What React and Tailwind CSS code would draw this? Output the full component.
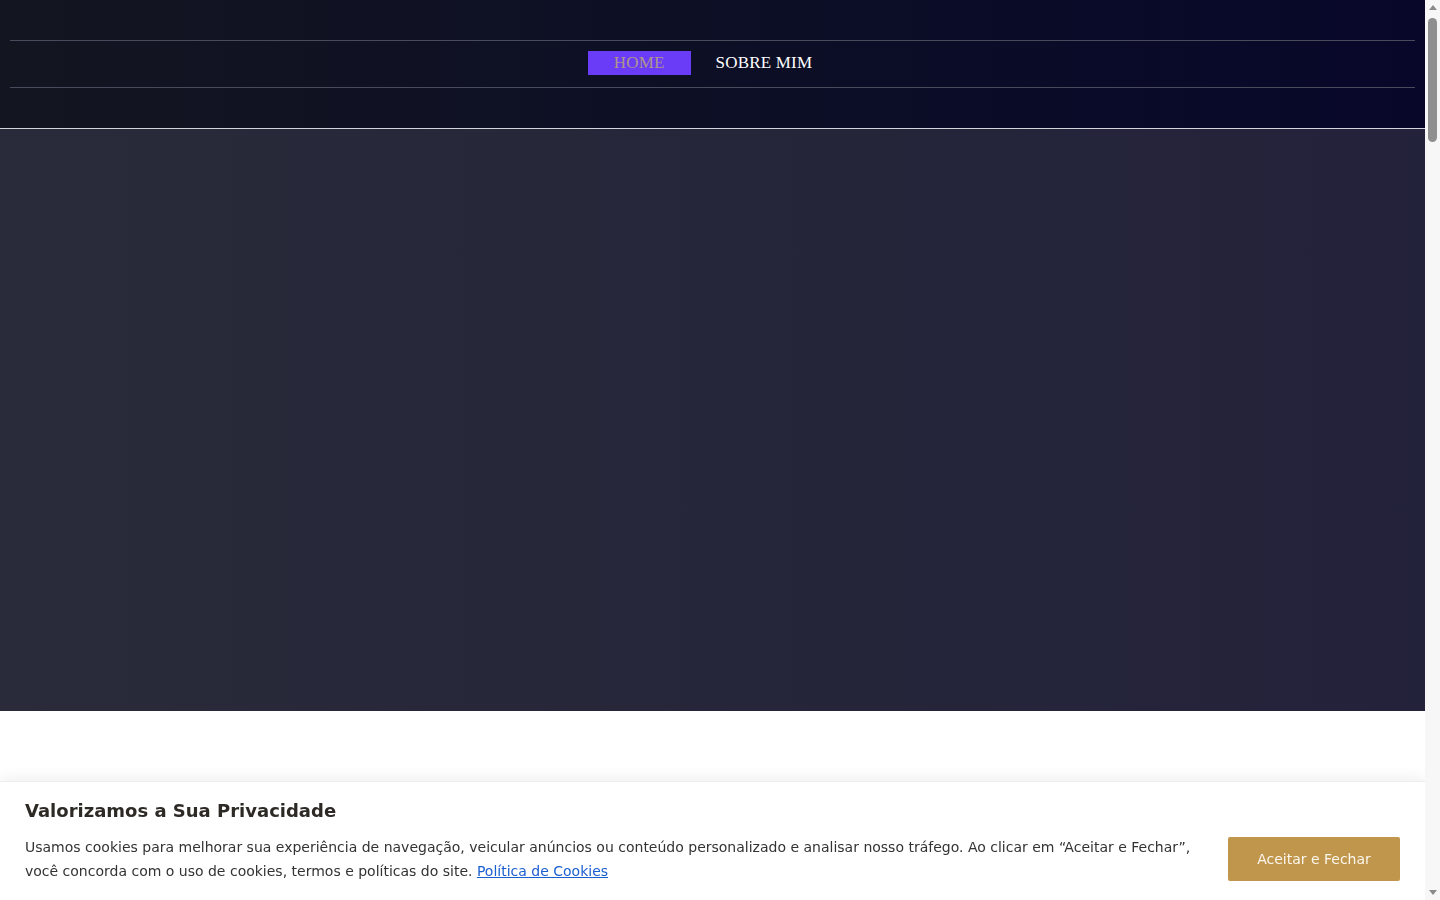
function FakeScrollbar() {
  return (
    <div className="fixed top-0 right-0 h-screen w-[15px] bg-[#f7f7f7] flex flex-col items-center">
      <div className="h-[15px] flex items-center justify-center">
        <div className="w-0 h-0 border-x-[4px] border-x-transparent border-b-[5px] border-b-[#8a8a8a]" />
      </div>
      <div className="w-[9px] h-[124px] mt-[3px] rounded-full bg-[#8f8f8f]" />
      <div className="flex-1" />
      <div className="h-[15px] flex items-center justify-center">
        <div className="w-0 h-0 border-x-[4px] border-x-transparent border-t-[5px] border-t-[#8a8a8a]" />
      </div>
    </div>
  );
}

export default function App() {
  return (
    <div className="min-h-screen bg-white" style={{ fontFamily: '"DejaVu Sans", sans-serif' }}>
      <div className="mr-[15px]">
        <header className="h-[129px] bg-gradient-to-r from-[#131520] to-[#08072a] border-b border-[#d4d4dc] pt-10">
          <nav className="mx-[10px] border-y border-[#4a4a5c] h-[48px] pb-[2px] flex items-center justify-center" style={{ fontFamily: '"Liberation Serif", "DejaVu Serif", serif' }}>
            <a href="#" className="bg-[#6b3cf7] text-[#ad968c] text-[17px] leading-[24px] px-[26px] tracking-[0.2px]">HOME</a>
            <a href="#" className="text-white text-[17px] leading-[24px] px-[25px] tracking-[0.2px]">SOBRE MIM</a>
          </nav>
        </header>

        <section className="h-[582px] bg-gradient-to-r from-[#292b3a] via-[#252639] to-[#23223b]" />

        <div className="h-[5600px] bg-white" />
      </div>

      <div className="fixed left-0 right-[15px] bottom-0 bg-white shadow-[0_-4px_12px_rgba(0,0,0,0.06)] border-t border-[#eeeeee] px-[25px] pt-[17px] pb-[17px]">
        <h2 className="text-[18px] font-bold text-[#2d2a26] leading-[24px]">Valorizamos a Sua Privacidade</h2>
        <div className="flex items-center gap-[30px] mt-[12px]">
          <p className="flex-1 text-[14px] leading-[24px] text-[#333333]">
            Usamos cookies para melhorar sua experiência de navegação, veicular anúncios ou conteúdo personalizado e analisar nosso tráfego. Ao clicar em “Aceitar e Fechar”, você concorda com o uso de cookies, termos e políticas do site.{" "}
            <a href="#" className="text-[#1a5fd0] underline">Política de Cookies</a>
          </p>
          <button className="w-[172px] h-[44px] bg-[#c0964c] text-[#fbf6ec] text-[14px] rounded-[2px] shrink-0">Aceitar e Fechar</button>
        </div>
      </div>

      <FakeScrollbar />
    </div>
  );
}
